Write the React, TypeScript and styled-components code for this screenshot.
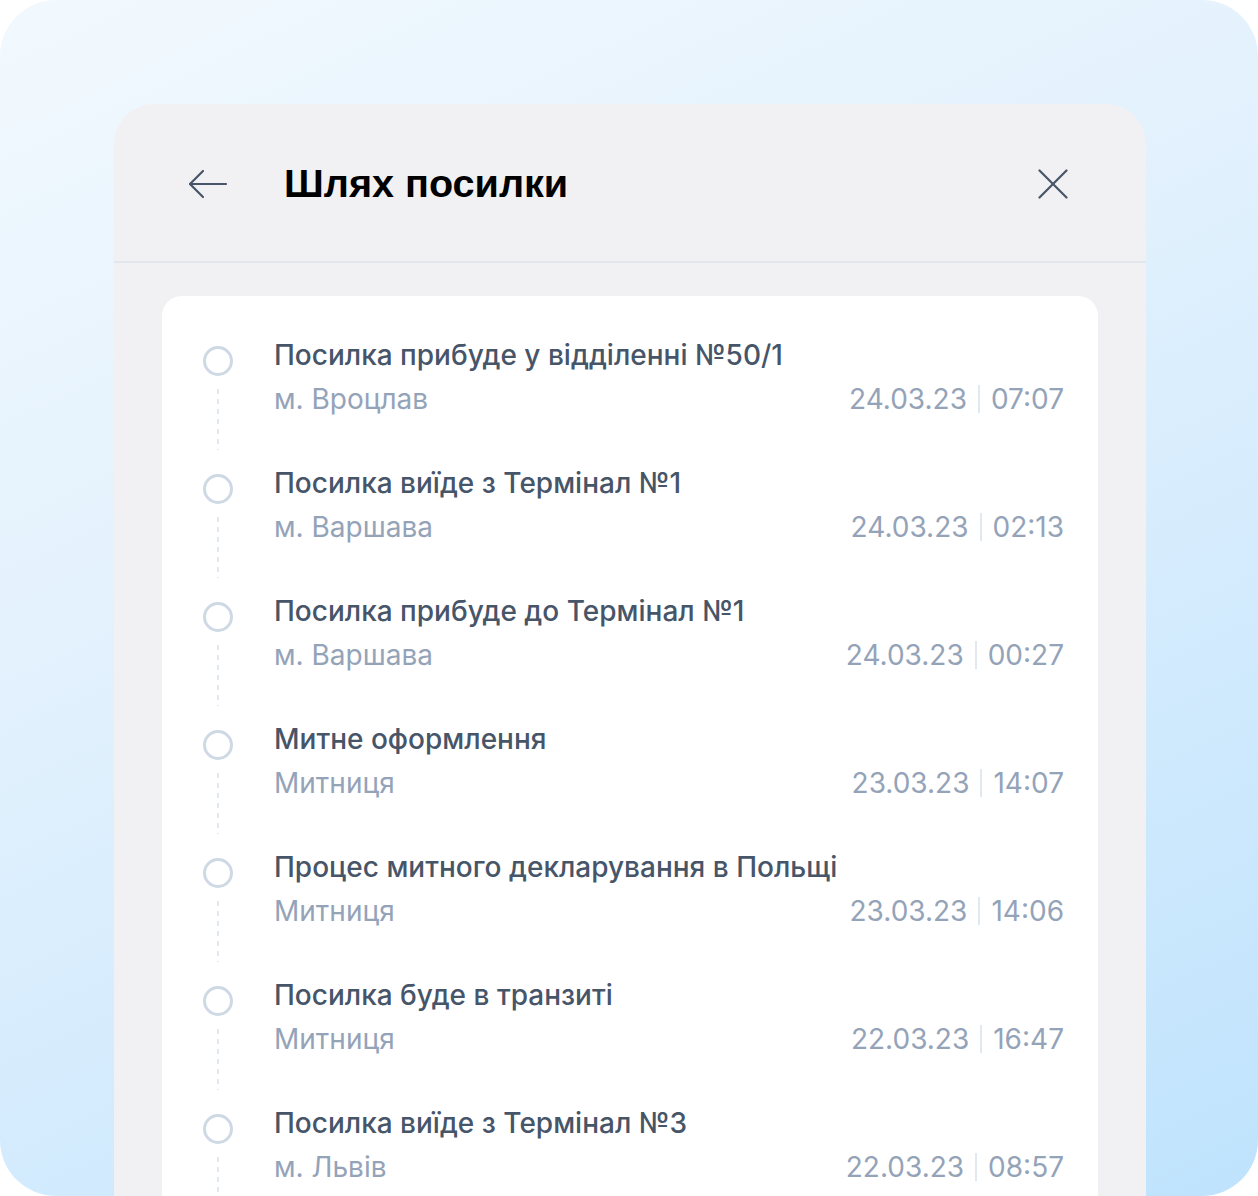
import React from "react";
import styled, { createGlobalStyle } from "styled-components";

const Global = createGlobalStyle`
  html, body { margin: 0; padding: 0; background: #ffffff; }
  body { font-family: Inter, "Noto Sans", sans-serif; -webkit-font-smoothing: antialiased; }
`;

const Frame = styled.div`
  width: 1258px;
  height: 1196px;
  border-radius: 56px;
  overflow: hidden;
  background: linear-gradient(155deg, #f2f9fe 0%, #e2f1fd 40%, #bfe3fd 100%);
  display: flex;
  flex-direction: column;
  align-items: flex-start;
  padding: 104px 0 0 114px;
  box-sizing: border-box;
`;

const Panel = styled.div`
  width: 1032px;
  flex: 1;
  background: #f1f1f3;
  border-radius: 40px 40px 0 0;
  display: flex;
  flex-direction: column;
  overflow: hidden;
`;

const Header = styled.header`
  height: 159px;
  flex-shrink: 0;
  border-bottom: 2px solid #e2e6ed;
  display: flex;
  align-items: center;
  padding: 2px 78px 0 74px;
  box-sizing: border-box;
`;

const IconButton = styled.button`
  padding: 0;
  border: none;
  background: transparent;
  display: flex;
  align-items: center;
  justify-content: center;
  color: #475569;
`;

const Title = styled.h1`
  margin: 0 0 0 56px;
  flex: 1;
  font-family: "Liberation Sans", Arial, sans-serif;
  font-weight: 700;
  font-size: 39.6px;
  color: #000;
`;

const Card = styled.section`
  margin: 33px 48px 0 48px;
  flex: 1;
  background: #ffffff;
  border-radius: 20px 20px 0 0;
  padding: 41px 34px 0 41px;
  display: flex;
  flex-direction: column;
`;

const Item = styled.div`
  height: 128px;
  display: grid;
  grid-template-columns: 30px 1fr;
  column-gap: 41px;
`;

const Marker = styled.div`
  display: flex;
  flex-direction: column;
  align-items: center;
  padding-top: 9px;
`;

const Circle = styled.div`
  width: 30px;
  height: 30px;
  box-sizing: border-box;
  border-radius: 50%;
  border: 3px solid #cfd9e6;
  flex-shrink: 0;
`;

const Dash = styled.div`
  width: 2px;
  flex: 1;
  margin: 13px 0 15px;
  background: repeating-linear-gradient(
    to bottom,
    #e2e8f0 0px,
    #e2e8f0 5px,
    transparent 5px,
    transparent 10px
  );
`;

const Content = styled.div`
  display: flex;
  flex-direction: column;
  gap: 8px;
`;

const ItemTitle = styled.div`
  font-size: 28px;
  line-height: 36px;
  font-weight: 500;
  color: #475569;
`;

const Meta = styled.div`
  display: flex;
  align-items: center;
  justify-content: space-between;
  font-size: 28px;
  line-height: 36px;
  color: #94a3b8;
`;

const When = styled.div`
  display: flex;
  align-items: center;
`;

const Sep = styled.span`
  width: 2px;
  height: 28px;
  background: #e2e8f0;
  margin: 0 11px;
`;

type Event = { title: string; place: string; date: string; time: string };

const events: Event[] = [
  { title: "Посилка прибуде у відділенні №50/1", place: "м. Вроцлав", date: "24.03.23", time: "07:07" },
  { title: "Посилка виїде з Термінал №1", place: "м. Варшава", date: "24.03.23", time: "02:13" },
  { title: "Посилка прибуде до Термінал №1", place: "м. Варшава", date: "24.03.23", time: "00:27" },
  { title: "Митне оформлення", place: "Митниця", date: "23.03.23", time: "14:07" },
  { title: "Процес митного декларування в Польщі", place: "Митниця", date: "23.03.23", time: "14:06" },
  { title: "Посилка буде в транзиті", place: "Митниця", date: "22.03.23", time: "16:47" },
  { title: "Посилка виїде з Термінал №3", place: "м. Львів", date: "22.03.23", time: "08:57" },
];

const ArrowLeft = () => (
  <svg width="40" height="40" viewBox="0 0 40 40" fill="none" stroke="currentColor" strokeWidth="2.2" strokeLinecap="round" strokeLinejoin="round">
    <path d="M38 20H2" />
    <path d="M15 7L2 20L15 33" />
  </svg>
);

const Close = () => (
  <svg width="30" height="30" viewBox="0 0 30 30" fill="none" stroke="currentColor" strokeWidth="2.2" strokeLinecap="round">
    <path d="M1.5 1.5L28.5 28.5" />
    <path d="M28.5 1.5L1.5 28.5" />
  </svg>
);

export default function App() {
  return (
    <>
      <Global />
      <Frame>
        <Panel>
          <Header>
            <IconButton aria-label="Назад"><ArrowLeft /></IconButton>
            <Title>Шлях посилки</Title>
            <IconButton aria-label="Закрити"><Close /></IconButton>
          </Header>
          <Card>
            {events.map((e, i) => (
              <Item key={i}>
                <Marker>
                  <Circle />
                  <Dash />
                </Marker>
                <Content>
                  <ItemTitle>{e.title}</ItemTitle>
                  <Meta>
                    <span>{e.place}</span>
                    <When>
                      <span>{e.date}</span>
                      <Sep />
                      <span>{e.time}</span>
                    </When>
                  </Meta>
                </Content>
              </Item>
            ))}
          </Card>
        </Panel>
      </Frame>
    </>
  );
}
